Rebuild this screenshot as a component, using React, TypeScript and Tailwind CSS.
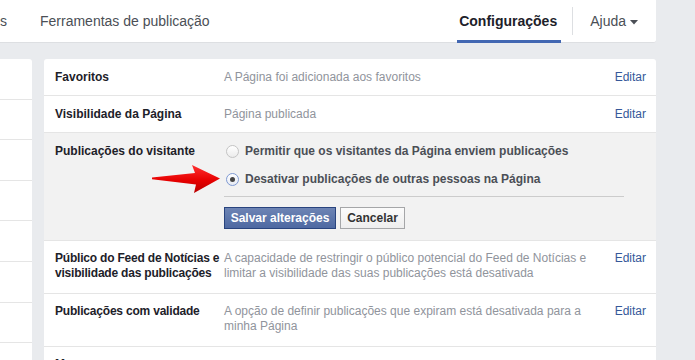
import React from "react";

type Row = {
  label: string[];
  value: string;
};

const TOP_ROWS: Row[] = [
  { label: ["Favoritos"], value: "A Página foi adicionada aos favoritos" },
  { label: ["Visibilidade da Página"], value: "Página publicada" },
];

const BOTTOM_ROWS: Row[] = [
  {
    label: ["Público do Feed de Notícias e", "visibilidade das publicações"],
    value:
      "A capacidade de restringir o público potencial do Feed de Notícias e limitar a visibilidade das suas publicações está desativada",
  },
  {
    label: ["Publicações com validade"],
    value: "A opção de definir publicações que expiram está desativada para a minha Página",
  },
  { label: ["Mensagens"], value: "" },
];

const font = { fontFamily: '"Liberation Sans", Arial, Helvetica, sans-serif' };

function SettingRow({ row }: { row: Row }) {
  return (
    <div className="flex border-b border-[#e5e5e5] pt-[10px] pb-[12px] text-[12px] leading-[15px]">
      <div className="w-[180px] shrink-0 pl-[11px]">
        {row.label.map((line) => (
          <p key={line} className="whitespace-nowrap font-bold tracking-[-0.2px] text-[#1d2129]">
            {line}
          </p>
        ))}
      </div>
      <p className="w-[372px] text-[#90949c]">{row.value}</p>
      {row.value && <a className="ml-auto pr-[10px] text-[#365899]">Editar</a>}
    </div>
  );
}

function Radio({ checked, label }: { checked?: boolean; label: string }) {
  return (
    <label className="flex h-[28px] items-center">
      <span
        className={
          checked
            ? "ml-[2px] flex h-[13px] w-[13px] items-center justify-center rounded-full border border-[#7f9ad3] bg-gradient-to-b from-[#ffffff] to-[#e6eaf3]"
            : "ml-[2px] flex h-[13px] w-[13px] items-center justify-center rounded-full border border-[#c4c4c4] bg-gradient-to-b from-[#ffffff] to-[#ececec]"
        }
      >
        {checked && <span className="h-[5px] w-[5px] rounded-full bg-[#444]" />}
      </span>
      <span className="ml-[6px] font-bold text-[#4b4f56]">{label}</span>
    </label>
  );
}

function RedArrow() {
  // annotation drawn over the row, points at the selected radio
  return (
    <svg
      className="absolute left-[104px] top-[28px]"
      width="76"
      height="36"
      viewBox="0 0 76 36"
    >
      <defs>
        <linearGradient id="arrowFill" x1="0" y1="0" x2="0" y2="1">
          <stop offset="0" stopColor="#ff3030" />
          <stop offset="0.55" stopColor="#e60000" />
          <stop offset="1" stopColor="#b80000" />
        </linearGradient>
      </defs>
      <path
        d="M4 16.5 L47 12 L44 4 L72 17.5 L46 32 L48 23.5 L4 18.2 Z"
        fill="url(#arrowFill)"
      />
    </svg>
  );
}

export default function App() {
  return (
    <div className="h-[360px] w-[695px] overflow-hidden bg-[#e9ebee]" style={font}>
      <nav className="flex h-[43px] w-[656px] items-stretch rounded-br-[3px] border-b border-[#dddfe2] bg-white text-[14px] text-[#4b4f56]">
        <span className="flex items-center">s</span>
        <span className="ml-[33px] flex items-center">Ferramentas de publicação</span>
        <span className="relative ml-auto flex items-center px-[1px] font-bold text-[#1d2129]">
          Configurações
          <span className="absolute bottom-[-1px] left-[-1px] right-[-3px] h-[3px] bg-[#4267b2]" />
        </span>
        <span className="mx-[14px] my-[7px] w-px bg-[#dddfe2]" />
        <span className="flex items-center pl-[3px] pr-[18px]">
          Ajuda
          <svg className="ml-[4px] mt-[2px]" width="8" height="5" viewBox="0 0 8 5">
            <path d="M0 0 L8 0 L4 4.5 Z" fill="#4b4f56" />
          </svg>
        </span>
      </nav>

      <div className="mt-[16px] flex gap-[12px]">
        <aside className="w-[32px] shrink-0 rounded-tr-[3px] bg-white">
          {Array.from({ length: 8 }).map((_, i) => (
            <div key={i} className="h-[40.6px] border-b border-[#e5e5e5]" />
          ))}
        </aside>

        <main className="w-[612px] rounded-t-[3px] bg-white">
          {TOP_ROWS.map((r) => (
            <div
              key={r.label[0]}
              className="flex h-[37px] items-center border-b border-[#e5e5e5] text-[12px] leading-[15px]"
            >
              <div className="w-[180px] shrink-0 pl-[11px] font-bold text-[#1d2129]">{r.label[0]}</div>
              <p className="text-[#90949c]">{r.value}</p>
              <a className="ml-auto pr-[10px] text-[#365899]">Editar</a>
            </div>
          ))}

          <section className="relative flex h-[108px] border-b border-[#e5e5e5] bg-[#f2f2f2] text-[12px] leading-[15px]">
            <div className="w-[180px] shrink-0 pl-[11px] pt-[11px] font-bold text-[#1d2129]">
              Publicações do visitante
            </div>
            <div className="w-[400px] pt-[4px]">
              <Radio label="Permitir que os visitantes da Página enviem publicações" />
              <Radio checked label="Desativar publicações de outras pessoas na Página" />
              <div className="mt-[3px] h-px bg-[#cccccc]" />
              <div className="mt-[10px] flex gap-[4px]">
                <button className="h-[22px] w-[112px] border border-[#29447e] bg-gradient-to-b from-[#6d84b4] to-[#4e69a2] text-[12px] font-bold text-white">
                  Salvar alterações
                </button>
                <button className="h-[22px] w-[65px] border border-[#a5a6a8] bg-gradient-to-b from-[#fbfbfb] to-[#eeeeee] text-[12px] font-bold text-[#333]">
                  Cancelar
                </button>
              </div>
            </div>
            <RedArrow />
          </section>

          {BOTTOM_ROWS.map((r) => (
            <SettingRow key={r.label[0]} row={r} />
          ))}
        </main>
      </div>
    </div>
  );
}
